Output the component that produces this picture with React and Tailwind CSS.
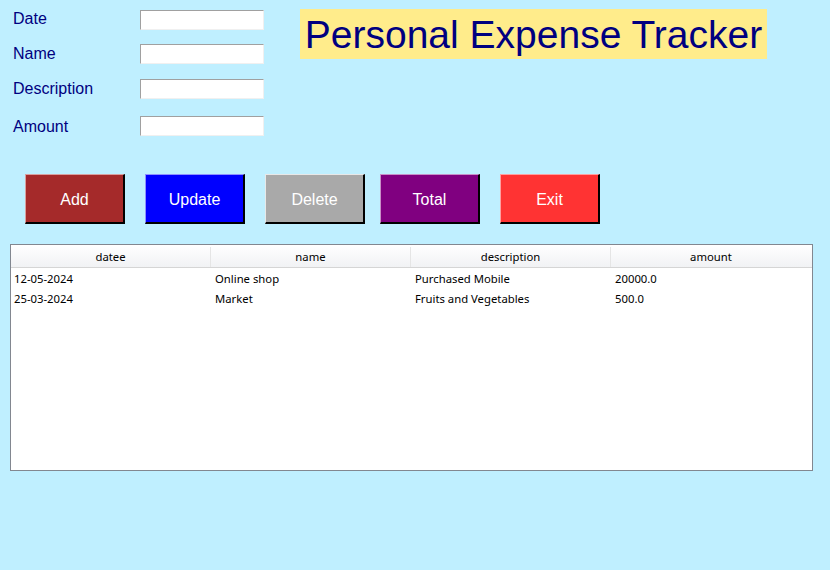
const ROWS = [
  { date: "12-05-2024", name: "Online shop", description: "Purchased Mobile", amount: "20000.0" },
  { date: "25-03-2024", name: "Market", description: "Fruits and Vegetables", amount: "500.0" },
];

const COLUMNS = ["datee", "name", "description", "amount"];

function Field({ label, className, labelClass }) {
  return (
    <div className={`flex items-center h-[20px] ${className || ""}`}>
      <span className={`w-[140px] pl-[13px] text-[16px] text-[#000080] leading-none ${labelClass || ""}`}>{label}</span>
      <input
        type="text"
        className="w-[124px] h-[20px] bg-white border-t border-l border-t-[#a0a0a0] border-l-[#a0a0a0] border-b border-r border-b-[#f0f0f0] border-r-[#f0f0f0] outline-none"
      />
    </div>
  );
}

function Btn({ label, className }) {
  return (
    <button
      className={`w-[100px] h-[50px] pt-[2px] text-white text-[16px] border-t border-l border-b-2 border-r-2 border-b-[#000] border-r-[#000] ${className}`}
    >
      {label}
    </button>
  );
}

export default function App() {
  return (
    <div
      className="w-[830px] h-[570px] bg-[#bfefff] overflow-hidden"
      style={{ fontFamily: '"Liberation Sans", Arial, sans-serif' }}
    >
      <div className="flex items-start">
        <div className="flex flex-col pt-[10px]">
          <Field label="Date" labelClass="-mt-[2px]" />
          <Field label="Name" className="mt-[14px]" />
          <Field label="Description" className="mt-[15px]" />
          <Field label="Amount" className="mt-[17px]" labelClass="mt-[1px]" />
        </div>
        <div className="ml-[36px] mt-[9px] w-[467px] h-[50px] bg-[#ffec8b] flex items-center justify-center text-[39px] text-[#000080] leading-none">
          Personal Expense Tracker
        </div>
      </div>

      <div className="flex mt-[38px] pl-[25px]">
        <Btn label="Add" className="bg-[#a52a2a] border-t-[#d9a0a0] border-l-[#d9a0a0]" />
        <Btn label="Update" className="ml-[20px] bg-[#0000ff] border-t-[#9090ff] border-l-[#9090ff]" />
        <Btn label="Delete" className="ml-[20px] bg-[#a9a9a9] border-t-[#e8e8e8] border-l-[#e8e8e8]" />
        <Btn label="Total" className="ml-[15px] bg-[#800080] border-t-[#c890c8] border-l-[#c890c8]" />
        <Btn label="Exit" className="ml-[20px] bg-[#ff3333] border-t-[#ffa0a0] border-l-[#ffa0a0]" />
      </div>

      <div
        className="ml-[10px] mt-[20px] w-[803px] h-[227px] bg-white border border-[#828790]"
        style={{ fontFamily: '"Noto Sans", "DejaVu Sans", sans-serif' }}
      >
        <div className="flex h-[23px] pt-[2px] bg-gradient-to-b from-white to-[#f1f2f4] border-b border-[#d5d5d5]">
          {COLUMNS.map((c, i) => (
            <div
              key={c}
              className={`w-[200px] flex items-center justify-center text-[11.3px] text-black ${i < 3 ? "border-r border-[#e5e5e5]" : ""}`}
            >
              {c}
            </div>
          ))}
        </div>
        <div className="pt-[1px]">
          {ROWS.map((r) => (
            <div key={r.date} className="flex h-[20px] items-center text-[11.3px] text-black">
              <div className="w-[200px] pl-[3px]">{r.date}</div>
              <div className="w-[200px] pl-[4px]">{r.name}</div>
              <div className="w-[200px] pl-[4px]">{r.description}</div>
              <div className="w-[200px] pl-[4px]">{r.amount}</div>
            </div>
          ))}
        </div>
      </div>
    </div>
  );
}
